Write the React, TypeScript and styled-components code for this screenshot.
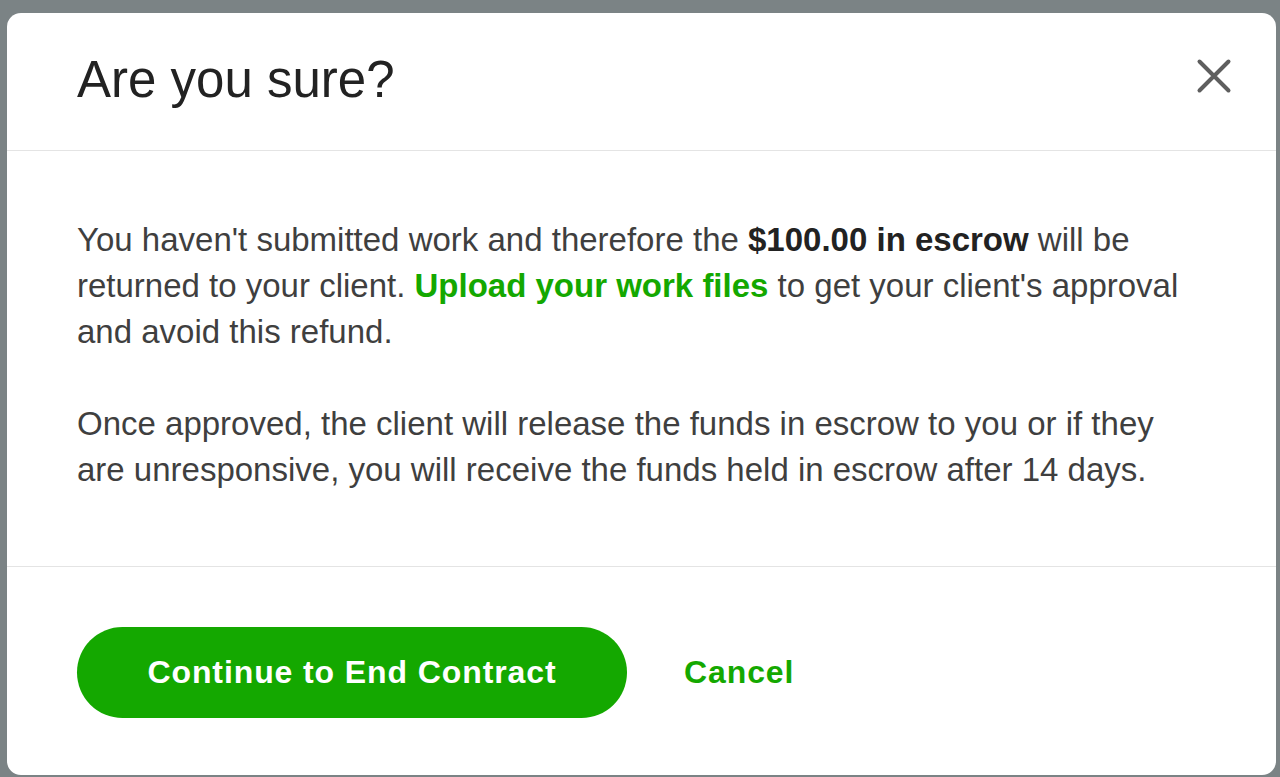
import React from "react";
import styled, { createGlobalStyle } from "styled-components";

const GlobalStyle = createGlobalStyle`
  html, body {
    margin: 0;
    padding: 0;
    background: #7b8385;
    font-family: "Liberation Sans", Arial, sans-serif;
  }
`;

const Backdrop = styled.div`
  width: 1280px;
  height: 777px;
  box-sizing: border-box;
  padding: 13px 4px 2px 7px;
  background: #7b8385;
  display: flex;
`;

const Modal = styled.div`
  flex: 1;
  background: #ffffff;
  border-radius: 14px;
  display: flex;
  flex-direction: column;
  overflow: hidden;
`;

const Header = styled.div`
  height: 138px;
  box-sizing: border-box;
  padding: 0 44px 12px 70px;
  display: flex;
  align-items: center;
  justify-content: space-between;
  border-bottom: 1px solid #e4e4e4;
`;

const Title = styled.h1`
  margin: 0;
  padding-top: 7px;
  font-size: 51px;
  font-weight: 400;
  color: #222222;
`;

const CloseButton = styled.button`
  background: none;
  border: none;
  padding: 0;
  width: 36px;
  height: 36px;
  display: flex;
  align-items: center;
  justify-content: center;
  cursor: pointer;
`;

const Body = styled.div`
  height: 416px;
  box-sizing: border-box;
  padding: 66px 78px 0 70px;
  border-bottom: 1px solid #e4e4e4;
`;

const Paragraph = styled.p`
  margin: 0 0 46px 0;
  font-size: 33px;
  line-height: 46px;
  color: #3f3f3f;
`;

const Strong = styled.span`
  font-weight: 700;
  color: #222222;
`;

const Link = styled.a`
  color: #14a800;
  font-weight: 700;
  text-decoration: none;
`;

const Footer = styled.div`
  flex: 1;
  display: flex;
  align-items: center;
  gap: 57px;
  padding: 0 70px;
`;

const Button = styled.button<{ $variant?: "primary" | "text" }>`
  border: none;
  font-family: inherit;
  font-size: 32px;
  font-weight: 700;
  letter-spacing: 0.9px;
  cursor: pointer;
  height: 91px;
  border-radius: 46px;
  padding: 0;
  width: ${(p) => (p.$variant === "text" ? "auto" : "550px")};
  background: ${(p) => (p.$variant === "text" ? "transparent" : "#14a800")};
  color: ${(p) => (p.$variant === "text" ? "#14a800" : "#ffffff")};
  margin-top: 2px;
`;

const CloseIcon = () => (
  <svg width="36" height="36" viewBox="0 0 36 36">
    <path
      d="M3.5 3.5 L32.5 32.5 M32.5 3.5 L3.5 32.5"
      stroke="#5e5e5e"
      strokeWidth="4"
      strokeLinecap="round"
    />
  </svg>
);

export default function App() {
  return (
    <>
      <GlobalStyle />
      <Backdrop>
        <Modal>
          <Header>
            <Title>Are you sure?</Title>
            <CloseButton aria-label="Close">
              <CloseIcon />
            </CloseButton>
          </Header>
          <Body>
            <Paragraph>
              You haven't submitted work and therefore the{" "}
              <Strong>$100.00 in escrow</Strong> will be returned to your
              client. <Link href="#">Upload your work files</Link> to get your
              client's approval and avoid this refund.
            </Paragraph>
            <Paragraph>
              Once approved, the client will release the funds in escrow to you
              or if they are unresponsive, you will receive the funds held in
              escrow after 14 days.
            </Paragraph>
          </Body>
          <Footer>
            <Button>Continue to End Contract</Button>
            <Button $variant="text">Cancel</Button>
          </Footer>
        </Modal>
      </Backdrop>
    </>
  );
}
